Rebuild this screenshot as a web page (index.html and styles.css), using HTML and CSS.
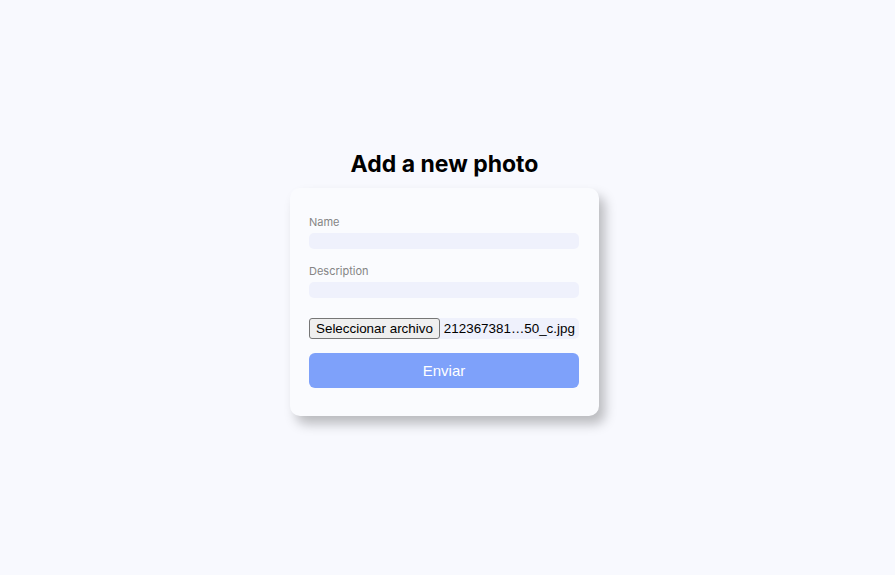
FILE: index.html
```html
<!DOCTYPE html>
<html lang="es">
<head>
<meta charset="utf-8">
<title>Add a new photo</title>
<link rel="stylesheet" href="styles.css">
</head>
<body>
<main class="page">
  <h1 class="title">Add a new photo</h1>
  <form class="card">
    <label class="label">Name</label>
    <div class="input"></div>
    <label class="label label-next">Description</label>
    <div class="input"></div>
    <div class="file-row">
      <span class="file-btn">Seleccionar archivo</span>
      <span class="file-name">212367381…50_c.jpg</span>
    </div>
    <div class="submit">Enviar</div>
  </form>
</main>
</body>
</html>
```
FILE: styles.css
```css
html, body {
  margin: 0;
  padding: 0;
  background: #f8f9fe;
  min-height: 100%;
}
.page {
  box-sizing: border-box;
  min-height: 575px;
  display: flex;
  flex-direction: column;
  align-items: center;
  padding: 150px 6px 60px 0;
  font-family: Inter, "Liberation Sans", sans-serif;
}
.title {
  margin: 0 0 10px;
  font-size: 23px;
  line-height: 28px;
  font-weight: 700;
  color: #000;
}
.card {
  width: 270px;
  padding: 28px 20px 28px 19px;
  background: #fafbfe;
  border-radius: 10px;
  box-shadow: 6px 8px 12px rgba(0, 0, 0, 0.25);
  display: flex;
  flex-direction: column;
}
.label {
  display: block;
  font-size: 11px;
  line-height: 13px;
  color: #858585;
  margin-bottom: 4px;
}
.label-next {
  margin-top: 16px;
}
.input {
  height: 16px;
  background: #eff1fc;
  border-radius: 5px;
}
.file-row {
  margin-top: 20px;
  display: flex;
  align-items: center;
  background: #eff1fc;
  border-radius: 5px;
  height: 21px;
  font-family: "Liberation Sans", Arial, sans-serif;
  font-size: 13.4px;
  color: #000;
}
.file-btn {
  box-sizing: border-box;
  height: 21px;
  line-height: 19px;
  padding: 0 6px;
  background: #efefef;
  border: 1px solid #767676;
  border-radius: 3px;
  white-space: nowrap;
}
.file-name {
  padding-left: 4px;
  white-space: nowrap;
}
.submit {
  margin-top: 14px;
  height: 35px;
  line-height: 35px;
  border-radius: 6px;
  background: #7ea1fa;
  color: #fff;
  text-align: center;
  font-family: "Liberation Sans", Arial, sans-serif;
  font-size: 15px;
}
```
